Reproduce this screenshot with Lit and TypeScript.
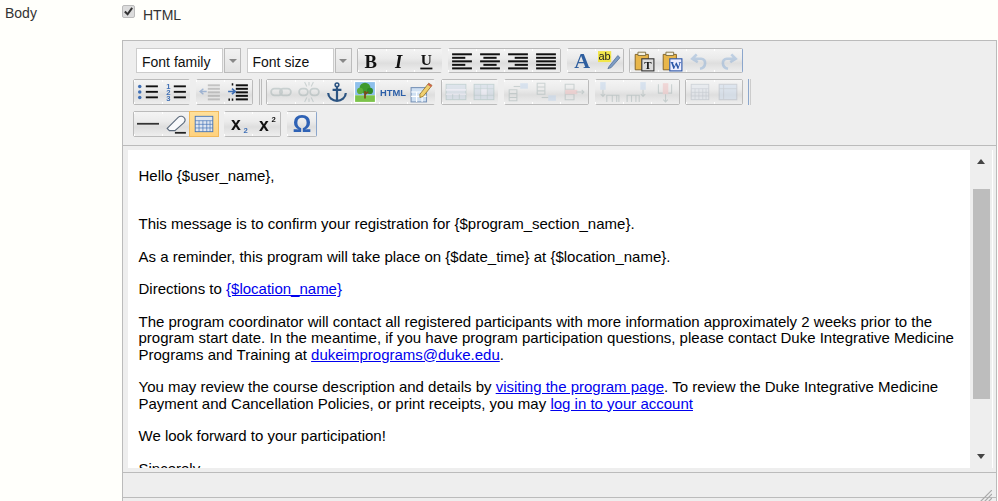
import { LitElement, html, css, svg } from "lit";
import { customElement } from "lit/decorators.js";

const D = "#111";
const B = "#3f6fb5";
const G = "#9aa";
const bars = (rows: [number, number][], c = D) =>
  rows.map(([x, w], i) => svg`<rect x=${x} y=${3 + i * 3.2} width=${w} height="1.8" fill=${c}/>`);
const listLines = (x: number) =>
  [5, 10, 15].map((y) => svg`<rect x=${x} y=${y - 1} width=${19 - x} height="1.7" fill=${D}/>`);
const t = (x: number, y: number, s: number, txt: string, fill: string, fam = "Liberation Sans", weight = "700", style = "normal") =>
  svg`<text x=${x} y=${y} font-size=${s} font-family="${fam}, sans-serif" font-weight=${weight} font-style=${style} fill=${fill} text-anchor="middle">${txt}</text>`;
const clip = (extra: unknown) => svg`
  <path d="M2 4h12v14H2z" fill="#e8b64a" stroke="#7a5a1c" stroke-width=".8"/>
  <path d="M4.5 2h7v3h-7z" fill="#f4f0df" stroke="#7a6a3c" stroke-width=".8"/>${extra}`;
const tableish = (c: string) => svg`
  <rect x="2" y="3" width="16" height="14" fill="#dfe6f0" stroke=${c} stroke-width=".8"/>
  <path d="M2 7h16M2 10.3h16M2 13.6h16M5.5 7v10M9 7v10M12.5 7v10M15.5 7v10" stroke=${c} stroke-width=".6" fill="none"/>`;

const ICONS: Record<string, unknown> = {
  bold: t(8.8, 16, 17, "B", "#111", "Liberation Serif"),
  italic: t(8.8, 16, 17, "I", "#111", "Liberation Serif", "700", "italic"),
  underline: svg`${t(8.5, 14, 14, "U", "#111", "Liberation Serif")}<rect x="3" y="16" width="11" height="1.6" fill="#111"/>`,
  left: bars([[1, 18], [1, 12], [1, 18], [1, 12], [1, 18]]),
  center: bars([[1, 18], [4, 12], [1, 18], [4, 12], [1, 18]]),
  right: bars([[1, 18], [7, 12], [1, 18], [7, 12], [1, 18]]),
  justify: bars([[1, 18], [1, 18], [1, 18], [1, 18], [1, 18]]),
  color: t(11, 16, 20, "A", "#2f5f9f", "Liberation Serif"),
  hilite: svg`<rect x="0" y="1" width="12" height="10" fill="#f2e64a"/>${t(6, 9.5, 10, "ab", "#222", "Liberation Sans", "400")}
    <path d="M10 15 18 5l2 2-8 9-3 1z" fill="#7c9cc4" stroke="#44628c" stroke-width=".6"/>`,
  pastet: clip(svg`<rect x="8" y="8" width="11" height="11" fill="#ddd" stroke="#333"/>${t(13.5, 17, 10, "T", "#111", "Liberation Serif")}`),
  pastew: clip(svg`<rect x="8" y="8" width="11" height="11" fill="#eef" stroke="#2a55a8"/>${t(13.5, 17, 10, "W", "#2a55a8", "Liberation Serif")}`),
  undo: svg`<path d="M7 4 3 8l5 3M4 8h7c5 0 5 8-1 9" fill="none" stroke="#7ea6d4" stroke-width="2.4"/>`,
  redo: svg`<path d="M13 4l4 4-5 3M16 8H9c-5 0-5 8 1 9" fill="none" stroke="#7ea6d4" stroke-width="2.4"/>`,
  ul: svg`${[5, 10, 15].map((y) => svg`<circle cx="2.5" cy=${y} r="1.6" fill=${B}/>`)}${listLines(8)}`,
  ol: svg`${t(3, 7, 7, "1", B)}${t(3, 12.5, 7, "2", B)}${t(3, 18, 7, "3", B)}${listLines(8)}`,
  outdent: svg`${bars([[8, 11], [8, 11], [8, 11], [8, 11], [8, 11]], "#888")}<path d="M1 9.5h6M4 7 1 9.5 4 12" stroke=${B} stroke-width="1.3" fill="none"/>`,
  indent: svg`${bars([[8, 11], [8, 11], [8, 11], [8, 11], [8, 11]])}<path d="M1 9.5h6M4.5 7 7.5 9.5 4.5 12" stroke=${B} stroke-width="1.5" fill="none"/>
    <path d="M5 2v2M5 16v2M2 16v2" stroke=${D} stroke-width="1.4"/>`,
  link: svg`<rect x="1" y="7" width="10" height="6" rx="3" fill="none" stroke=${G} stroke-width="1.6"/><rect x="9" y="7" width="10" height="6" rx="3" fill="none" stroke=${G} stroke-width="1.6"/>`,
  unlink: svg`<rect x="1" y="7" width="8" height="6" rx="3" fill="none" stroke=${G} stroke-width="1.6"/><rect x="11" y="7" width="8" height="6" rx="3" fill="none" stroke=${G} stroke-width="1.6"/>
    <path d="M6 1l2 4M14 1l-2 4M6 19l2-4M14 19l-2-4M10 1v3M10 16v3" stroke=${G}/>`,
  anchor: svg`<circle cx="10" cy="3.5" r="1.7" fill="none" stroke="#2c5482" stroke-width="1.4"/><path d="M10 5v13M6 8h8M2 11c0 4 4 7 8 7s8-3 8-7" fill="none" stroke="#2c5482" stroke-width="2"/>`,
  image: svg`<rect x="0" y="0" width="20" height="20" fill="#fff"/><rect x="1" y="1" width="18" height="12" fill="#8ec0ec"/><rect x="1" y="13" width="18" height="6" fill="#7cc24a"/>
    <circle cx="10" cy="6.5" r="5" fill="#3f9a2e"/><circle cx="5.5" cy="9" r="2.8" fill="#5cae3a"/><circle cx="14.5" cy="9" r="2.8" fill="#2f8a26"/><path d="M10 9v7M10 12l3-2" stroke="#7a4a1c" stroke-width="1.6"/>`,
  htmlc: t(10, 13.5, 8.5, "HTML", "#2c5fa8"),
  edit: svg`<rect x="1" y="6" width="14" height="13" fill="#cfe0f2" stroke="#7a94b8"/><path d="M1 10h14M1 14h14M6 10v9M11 10v9" stroke="#fff"/>
    <path d="M9 12 17 2l3 2-8 10-3 1z" fill="#f0d070" stroke="#8a6a20" stroke-width=".7"/><path d="M17 2l3 2 -1 1.5-3-2z" fill="#d06050"/>`,
  rowtb: svg`<rect x="1" y="3" width="18" height="14" fill="#c8d6e8" stroke="#8aa" stroke-width=".8"/><path d="M1 8h18M1 12h18" stroke="#eef" stroke-width="1.5"/><path d="M7 12v5M13 12v5" stroke="#8aa" stroke-width=".7"/>`,
  cell: svg`<rect x="1" y="3" width="18" height="14" fill="#c8d6e8" stroke="#8aa" stroke-width=".8"/><rect x="7" y="7" width="6" height="6" fill="#eef"/><path d="M1 7h18M1 13h18M7 3v14M13 3v14" stroke="#8aa" stroke-width=".5"/>`,
  rowb: svg`<path d="M2 8h7v10H2zM2 11.5h7M2 15h7" fill="none" stroke=${G}/><rect x="12" y="2" width="7" height="5" fill="#b8d0ec"/><path d="M6 5h6" stroke=${G}/>`,
  rowa: svg`<path d="M2 2h7v10H2zM2 5.5h7M2 9h7" fill="none" stroke=${G}/><rect x="12" y="13" width="7" height="5" fill="#b8d0ec"/><path d="M6 15h6" stroke=${G}/>`,
  rowd: svg`<path d="M2 3h8v14H2zM2 7.5h8M2 12h8" fill="none" stroke=${G}/><rect x="2" y="8" width="11" height="4" fill="#f0b4b4"/><path d="M12 10h7M17 8l2 2-2 2" fill="none" stroke=${G}/>`,
  colb: svg`<rect x="2" y="1" width="5" height="7" fill="#b8d0ec"/><path d="M4.5 8v6M2.5 12l2 2 2-2" fill="none" stroke=${G}/><path d="M8 19v-6h11v6M13 13v6M17 13v6" fill="none" stroke=${G}/>`,
  cola: svg`<rect x="13" y="1" width="5" height="7" fill="#b8d0ec"/><path d="M15.5 8v6M13.5 12l2 2 2-2" fill="none" stroke=${G}/><path d="M1 19v-6h11v6M5 13v6M9 13v6" fill="none" stroke=${G}/>`,
  cold: svg`<path d="M4 3v8h12V3" fill="none" stroke=${G}/><rect x="8" y="2" width="5" height="10" fill="#f0b4b4"/><path d="M10.5 12v7M8.5 17l2 2 2-2" fill="none" stroke=${G}/>`,
  grid: tableish("#a0aab8"),
  tprops: svg`<rect x="2" y="3" width="16" height="14" fill="#c6d8ee" stroke="#a0aab8"/><path d="M2 7h16M6 3v14" stroke="#a0aab8" stroke-width=".7"/>`,
  hr: svg`<rect x="0" y="9" width="20" height="1.6" fill="#333"/>`,
  erase: svg`<path d="M2 14 12 4c2-2 5-1 6 1s0 3-1 4L9 16H4z" fill="#f8f9fb" stroke="#5c6a7c"/><path d="M9 18h10" stroke="#222" stroke-width="1.6"/>`,
  table: tableish("#3f6fb5"),
  sub: svg`${t(8, 15, 16, "x", "#111")}${t(17, 18, 7, "2", B)}`,
  sup: svg`${t(8, 16, 16, "x", "#111")}${t(17, 8, 7, "2", "#111")}`,
  omega: t(10, 17, 21, "Ω", "#2f62b5", "Liberation Sans"),
};

type Btn = string;
const dim = new Set(["undo", "redo", "outdent", "link", "unlink", "rowtb", "cell", "rowb", "rowa", "rowd", "colb", "cola", "cold", "grid", "tprops"]);

@customElement("app-root")
export class AppRoot extends LitElement {
  static styles = css`
    :host {
      display: block;
      width: 998px;
      height: 501px;
      overflow: hidden;
      background: #fffffb;
      font: 14px/16px "Liberation Sans", Arial, sans-serif;
      color: #333;
    }
    .field { display: grid; grid-template-columns: 122px 875px; }
    .label { padding: 5px 0 0 5px; }
    .check { height: 40px; display: flex; align-items: flex-start; padding-top: 5px; box-sizing: border-box; }
    .box {
      width: 13px; height: 13px; box-sizing: border-box;
      border: 1px solid #bbb; border-radius: 2px; background: #dcdcdc;
      margin-right: 8px; display: flex; align-items: center; justify-content: center;
    }
    .box svg { width: 11px; height: 11px; }
    .check-label { margin-top: 2px; }
    .editor {
      position: relative;
      border: 1px solid #bbb;
      border-bottom: 0;
      background: #eee;
      height: 461px;
      box-sizing: border-box;
    }
    .toolbar {
      height: 105px; box-sizing: border-box;
      border-bottom: 1px solid #bbb;
      padding: 7px 0 0 10px;
      display: flex; flex-direction: column; gap: 6px;
    }
    .row { display: flex; gap: 5.5px; height: 26px; align-items: stretch; }
    .row.first { height: 25px; margin-left: 3px; }
    .selectwrap { display: flex; gap: 1px; }
    .select {
      width: 87px; box-sizing: border-box; background: #fff;
      border: 1px solid #ccc; color: #111; padding: 5px 0 0 5px;
      white-space: nowrap;
    }
    .drop {
      width: 17px; box-sizing: border-box; border: 1px solid #bbb;
      background: linear-gradient(#f2f2f2, #e2e2e2);
      display: flex; align-items: center; justify-content: center;
    }
    .drop i { border: 4px solid transparent; border-top: 4px solid #888; border-bottom: 0; }
    .group {
      display: flex; box-sizing: border-box;
      border: 1px solid #bbb; border-radius: 2px;
    }
    .group.blue { border-right-color: #8ba6cc; }
    .btn {
      width: 28px; display: flex; align-items: center; justify-content: center;
      background:
        linear-gradient(#fff, #fff) 0 0 / 1px 2px no-repeat,
        linear-gradient(#fff, #fff) 0 100% / 1px 2px no-repeat,
        linear-gradient(#f4f4f4, #ebebeb 40%, #dedede 62%, #eeeeee);
    }
    .btn:first-child { margin-left: -0.35px; }
    .btn:last-child { margin-right: -0.35px; }
    .btn:only-child { width: 29px; }
    .btn.on {
      background: linear-gradient(#ffe09a, #ffd27f);
      box-shadow: 0 0 0 1px #f0b95c;
    }
    .btn svg { width: 22px; height: 22px; filter: blur(0.35px); overflow: visible; flex: none; }
    .btn.dim svg { opacity: 0.42; }
    .sep { width: 3px; box-sizing: border-box; border-left: 1px solid #bbb; border-right: 1px solid #bbb; margin-right: -1px; }
    .sep.blue { border-left-color: #8ba6cc; border-right-color: #ccc; }
    .main { display: flex; padding: 4px 3px 0 5px; height: 326px; box-sizing: border-box; }
    .doc {
      flex: none;
      width: 842px; height: 318px; box-sizing: border-box; overflow: hidden;
      background: #fff; color: #000; padding: 18px 0 0 10.5px;
      font-size: 15px; line-height: 16.4px;
    }
    .doc p { margin: 0 0 16.2px; width: 824px; }
    .doc p.hello { margin-bottom: 31.6px; }
    .doc a { color: #00e; text-decoration: underline; }
    .bar {
      flex: none;
      width: 22px; height: 318px; background: #eee; border-right: 1px solid #fff;
      box-sizing: content-box; display: flex; flex-direction: column; align-items: center;
    }
    .up { margin-top: 9px; border: 4.5px solid transparent; border-bottom: 5px solid #444; border-top: 0; }
    .thumb { width: 17px; height: 210px; background: #bdbdbd; margin-top: 25px; }
    .down { margin-top: 55px; border: 4.5px solid transparent; border-top: 5px solid #444; border-bottom: 0; }
    .status { height: 26px; border-top: 1px solid #bbb; border-bottom: 1px solid #bbb; box-sizing: border-box; }
    .resize { position: absolute; right: 4px; top: 449px; width: 12px; height: 12px; }
  `;

  private group(items: Btn[], opts: { blue?: boolean; on?: string } = {}) {
    return html`<div class="group ${opts.blue ? "blue" : ""}">
      ${items.map(
        (n) => html`<span class="btn ${dim.has(n) ? "dim" : ""} ${opts.on === n ? "on" : ""}"
          ><svg viewBox="0 0 20 20">${ICONS[n]}</svg></span>`
      )}
    </div>`;
  }

  private select(label: string) {
    return html`<div class="selectwrap">
      <div class="select">${label}</div>
      <div class="drop"><i></i></div>
    </div>`;
  }

  render() {
    return html`
      <div class="field">
        <div class="label">Body</div>
        <div>
          <div class="check">
            <span class="box"
              ><svg viewBox="0 0 12 12"><path d="M2 6l3 3 5-7" fill="none" stroke="#333" stroke-width="2.2"/></svg></span
            >
            <span class="check-label">HTML</span>
          </div>
          <div class="editor">
            <div class="toolbar">
              <div class="row first">
                ${this.select("Font family")} ${this.select("Font size")}
                ${this.group(["bold", "italic", "underline"])}
                ${this.group(["left", "center", "right", "justify"])}
                ${this.group(["color", "hilite"])}
                ${this.group(["pastet", "pastew", "undo", "redo"], { blue: true })}
              </div>
              <div class="row">
                ${this.group(["ul", "ol"])}
                ${this.group(["outdent", "indent"])}
                <div class="sep"></div>
                ${this.group(["link", "unlink", "anchor", "image", "htmlc", "edit"])}
                ${this.group(["rowtb", "cell"])}
                ${this.group(["rowb", "rowa", "rowd"])}
                ${this.group(["colb", "cola", "cold"])}
                ${this.group(["grid", "tprops"])}
                <div class="sep blue"></div>
              </div>
              <div class="row">
                ${this.group(["hr", "erase", "table"], { on: "table" })}
                ${this.group(["sub", "sup"])}
                ${this.group(["omega"], { blue: true })}
              </div>
            </div>
            <div class="main">
              <div class="doc">
                <p class="hello">Hello {$user_name},</p>
                <p>This message is to confirm your registration for {$program_section_name}.</p>
                <p>As a reminder, this program will take place on {$date_time} at {$location_name}.</p>
                <p>Directions to <a href="#">{$location_name}</a></p>
                <p>
                  The program coordinator will contact all registered participants with more information approximately 2 weeks prior to the
                  program start date. In the meantime, if you have program participation questions, please contact Duke Integrative Medicine
                  Programs and Training at <a href="#">dukeimprograms@duke.edu</a>.
                </p>
                <p>
                  You may review the course description and details by <a href="#">visiting the program page</a>. To review the Duke Integrative Medicine
                  Payment and Cancellation Policies, or print receipts, you may <a href="#">log in to your account</a>
                </p>
                <p>We look forward to your participation!</p>
                <p>Sincerely,</p>
              </div>
              <div class="bar">
                <div class="up"></div>
                <div class="thumb"></div>
                <div class="down"></div>
              </div>
            </div>
            <div class="status"></div>
            <svg class="resize" viewBox="0 0 12 12">
              <path d="M0 12 12 0M4 12l8-8M8 12l4-4" stroke="#aaa" stroke-width="1.2" fill="none"/>
            </svg>
          </div>
        </div>
      </div>
    `;
  }
}
